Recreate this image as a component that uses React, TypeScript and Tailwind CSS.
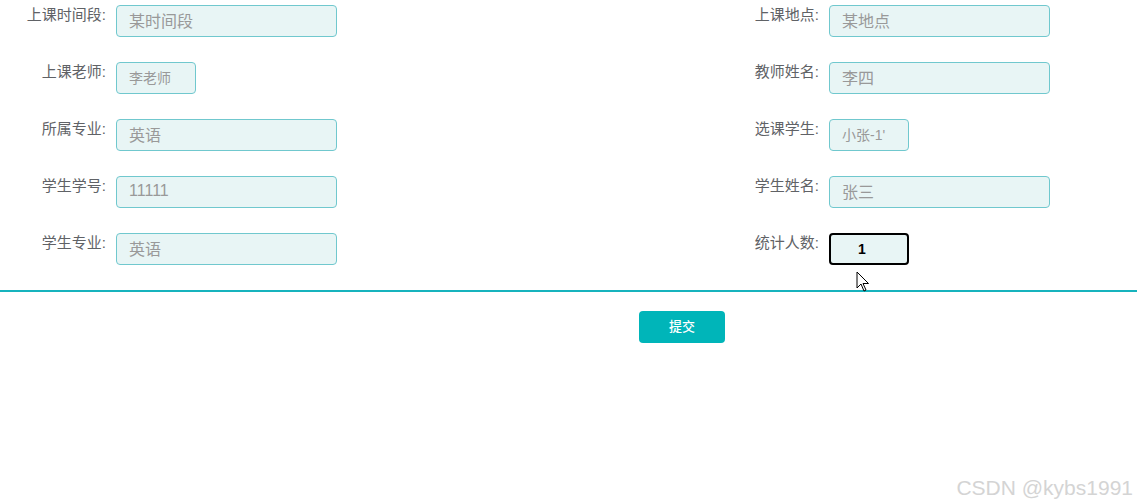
const LEFT = [
  { label: "上课时间段:", value: "某时间段", small: false },
  { label: "上课老师:", value: "李老师", small: true },
  { label: "所属专业:", value: "英语", small: false },
  { label: "学生学号:", value: "11111", small: false },
  { label: "学生专业:", value: "英语", small: false },
];

const RIGHT = [
  { label: "上课地点:", value: "某地点", small: false },
  { label: "教师姓名:", value: "李四", small: false },
  { label: "选课学生:", value: "小张-1'", small: true },
  { label: "学生姓名:", value: "张三", small: false },
];

type Campo = { label: string; value: string; small: boolean };

function Linha({ campo }: { campo: Campo }) {
  return (
    <div className="flex items-start">
      <label className="w-[106px] shrink-0 text-right text-[15px] leading-5 text-[#606266]">{campo.label}</label>
      <input
        readOnly
        value={campo.value}
        className={
          campo.small
            ? "ml-[10px] h-8 w-[80px] rounded-[4px] border border-[#70c8ce] bg-[#e8f5f5] pb-[2px] pl-[12px] text-[14px] text-[#999] outline-none"
            : "ml-[10px] h-8 w-[221px] rounded-[4px] border border-[#70c8ce] bg-[#e8f5f5] pb-[2px] pl-[12px] text-[16px] text-[#999] outline-none"
        }
      />
    </div>
  );
}

export default function App() {
  return (
    <div
      className="relative h-[504px] w-full overflow-hidden bg-white"
      style={{ fontFamily: '"Liberation Sans", "Noto Sans CJK SC", sans-serif' }}
    >
      <div className="grid grid-cols-[713px_1fr] pt-[5px]">
        <div className="flex flex-col gap-[25px]">
          {LEFT.map((campo) => (
            <Linha key={campo.label} campo={campo} />
          ))}
        </div>
        <div className="flex flex-col gap-[25px]">
          {RIGHT.map((campo) => (
            <Linha key={campo.label} campo={campo} />
          ))}
          <div className="flex items-start">
            <label className="w-[106px] shrink-0 text-right text-[15px] leading-5 text-[#606266]">统计人数:</label>
            <input
              readOnly
              value="1"
              className="ml-[10px] h-8 w-[80px] rounded-[4px] border-2 border-black bg-[#e8f5f5] pl-[27px] text-[14px] font-semibold text-black outline-none"
            />
          </div>
        </div>
      </div>

      <div className="mt-[25px] h-[2px] w-full bg-[#16b3bd]" />

      <div className="pt-[19px]">
        <button
          type="button"
          className="ml-[639px] h-8 w-[86px] rounded-[4px] bg-[#00b5b9] text-[13px] font-medium text-white"
        >
          提交
        </button>
      </div>

      <svg
        className="absolute left-[856px] top-[271px]"
        width="14"
        height="22"
        viewBox="0 0 14 22"
        aria-hidden="true"
      >
        <path d="M1 1 L1 17 L5 13 L8 20 L10 19 L7 12.5 L12.5 12.5 Z" fill="white" stroke="black" strokeWidth="1" strokeLinejoin="round" />
      </svg>

      <span className="absolute bottom-[6px] right-[4px] text-[21px] leading-none text-[#d4d4d4]">
        CSDN @kybs1991
      </span>
    </div>
  );
}
